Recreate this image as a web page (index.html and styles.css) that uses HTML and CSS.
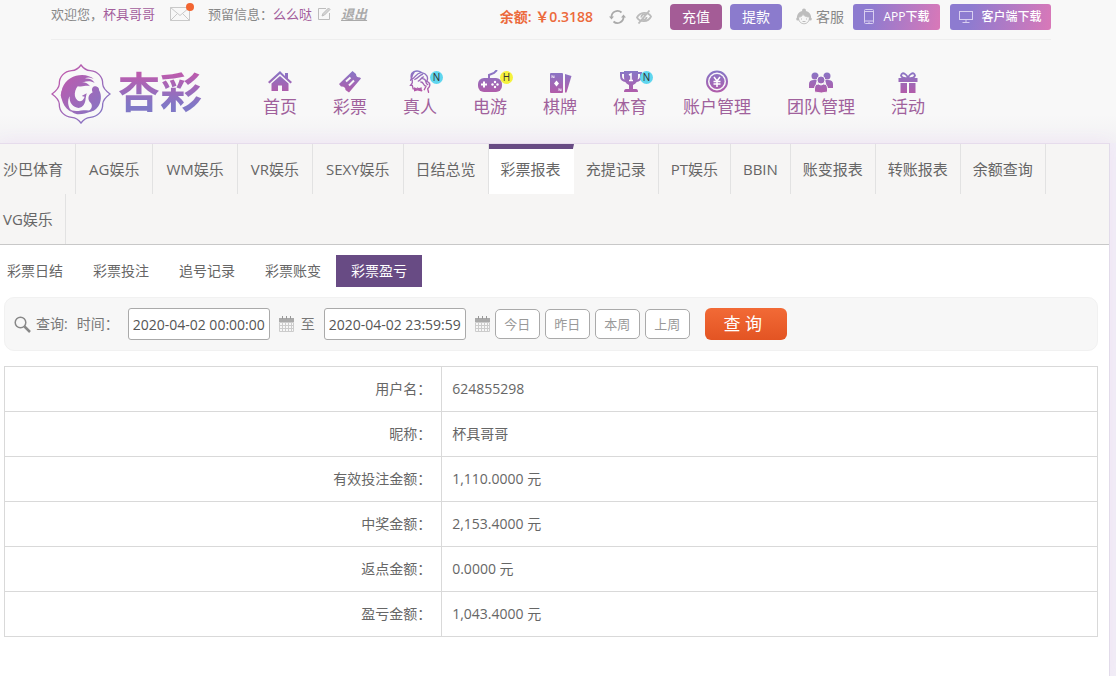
FILE: index.html
```html
<!DOCTYPE html>
<html lang="zh-CN">
<head>
  <meta charset="UTF-8">
  <meta name="viewport" content="width=device-width, initial-scale=1.0">
  <title>杏彩 - 彩票盈亏</title>
  <link rel="stylesheet" href="styles.css">
</head>
<body>
  <!-- shared gradients for the icons -->
  <svg class="defs" width="0" height="0" aria-hidden="true">
    <defs>
      <linearGradient id="grad" x1="0" y1="0" x2="0" y2="24" gradientUnits="userSpaceOnUse">
        <stop offset="0" stop-color="#8578c8"/>
        <stop offset="1" stop-color="#b45aa8"/>
      </linearGradient>
      <linearGradient id="grad-logo" x1="0" y1="0" x2="180" y2="180" gradientUnits="userSpaceOnUse">
        <stop offset="0.2" stop-color="#bb5cae"/>
        <stop offset="0.9" stop-color="#8078c6"/>
      </linearGradient>
    </defs>
  </svg>

  <header class="header">
    <div class="topbar">
      <div class="user-info">
        <span>欢迎您，<a href="#" class="name">杯具哥哥</a></span>
        <a href="#" class="mail" aria-label="站内信">
          <svg width="20" height="14" viewBox="0 0 20 14" fill="none" stroke="#c9c9c9"><path d="M.5.5h19v13H.5zM.5.5L10 8.500 19.500.5M.5 13.500L7.500 6.500M19.500 13.500L12.500 6.500"/></svg>
          <i class="mail-dot"></i>
        </a>
        <span>预留信息：<span class="name">么么哒</span></span>
        <a href="#" class="edit" aria-label="修改">
          <svg width="14" height="14" viewBox="0 0 14 14" fill="none" stroke="#bdbdbd"><path d="M9 1.500H1.500v11h11V6"/><path d="M5 9l1-2.500L11.500 1 13 2.500 7.500 8z" fill="#d5d5d5"/></svg>
        </a>
        <a href="#" class="logout">退出</a>
      </div>
      <div class="account">
        <span class="balance">余额: ￥0.3188</span>
        <button type="button" class="icon-btn" aria-label="刷新">
          <svg width="17" height="16" viewBox="0 0 17 16" fill="none" stroke="#aaa" stroke-width="1.800"><path d="M2.500 8A6 6 0 0 1 12.500 3.500M14.500 8A6 6 0 0 1 4.500 12.500"/><path d="M0 7.500h5L2.500 10.500zM12 8.500h5L14.500 5.500z" fill="#aaa" stroke="none"/></svg>
        </button>
        <button type="button" class="icon-btn" aria-label="隐藏余额">
          <svg width="16" height="14" viewBox="0 0 16 14" fill="none" stroke="#bbb" stroke-width="1.800"><path d="M1 7.500C4 1.500 12 1.500 15 6.500 12 12.500 4 12.500 1 7.500z"/><path d="M5.500 7.500a2.500 2.500 0 0 1 4-2.500M7 9.500a2.500 2.500 0 0 0 3.500-2.500M13.500.5L2.500 13.500"/></svg>
        </button>
        <button type="button" class="btn btn-recharge">充值</button>
        <button type="button" class="btn btn-withdraw">提款</button>
        <a href="#" class="service">
          <svg width="16" height="18" viewBox="0 0 16 18"><circle cx="8" cy="2.500" r="2" fill="#bdbdbd"/><path d="M1 11C-.5 0 16.500 0 15 11z" fill="#bdbdbd"/><path d="M2.500 9c2 .5 3.500-1 4.500-2.500C9 8.500 11 9 13.500 9 14 18 2 18 2.500 9z" fill="#f6f6f6" stroke="#c4c4c4"/><circle cx="1.700" cy="11" r="1.500" fill="#bdbdbd"/><circle cx="14.300" cy="11" r="1.500" fill="#bdbdbd"/><path d="M5.500 10.500v1M10.500 10.500v1M6.500 13.500h3" stroke="#bdbdbd"/></svg>
          客服
        </a>
        <a href="#" class="btn btn-download">
          <svg width="12" height="16" viewBox="0 0 12 16" fill="none" stroke="#d9cff0"><rect x="1.500" y=".5" width="9" height="14" rx="1"/><path d="M1.500 12h9M1.500 2.500h9M5.500 13.500h1"/></svg>
          <span>APP下载</span>
        </a>
        <a href="#" class="btn btn-download btn-client">
          <svg width="14" height="12" viewBox="0 0 14 12" fill="none" stroke="#d9cff0"><rect x=".5" y=".5" width="13" height="8"/><path d="M7 8.500v2.500M3.500 11.500h7"/></svg>
          <span>客户端下载</span>
        </a>
      </div>
    </div>

    <div class="brand-row">
      <a href="#" class="logo">
        <svg width="60" height="60" viewBox="0 0 180 180" aria-hidden="true">
          <path d="M90 3C82 14 74 19 62 20 40 22 24 38 25 60 24 72 14 82 3 90 14 98 24 108 25 120 24 142 40 158 62 160 74 161 82 166 90 177 98 166 106 161 118 160 140 158 156 142 155 120 156 108 166 98 177 90 166 82 156 72 155 60 156 38 140 22 118 20 106 19 98 14 90 3z" fill="none" stroke="url(#grad-logo)" stroke-width="4"/>
          <g fill="url(#grad-logo)">
            <path d="M131 47C104 22 50 31 34 72 24 101 38 133 63 145 49 127 49 109 56 97 54 116 66 131 83 132 96 131 103 119 104 103L107 88 92 96 101 98C96 110 88 116 79 109 64 96 72 64 97 55 109 50 121 51 131 57 125 45 112 42 101 44 111 37 123 41 131 47z"/>
            <path d="M77 65C86 50 107 52 117 67 104 62 93 72 77 65z"/>
            <path d="M131 67C139 67 145 72 144 78 153 92 151 115 141 128 133 140 121 144 110 143 121 137 126 128 120 118 107 106 112 91 125 85 121 77 123 69 131 67z"/>
            <path d="M53 133C71 151 99 132 122 142 106 148 97 151 83 151 70 151 59 143 53 133z"/>
            <path d="M29 94C31 80 36 70 44 63 37 79 37 101 43 116 35 110 31 104 29 94z"/>
          </g>
        </svg>
        <span class="logo-text">杏彩</span>
      </a>
      <nav class="nav">
        <a href="#">
          <svg width="26" height="24" viewBox="0 0 26 24" fill="url(#grad)"><path d="M13 1L1 12l1.500 1.500L13 4l10.500 9.500L25 12l-4-3.500V3h-3v3z"/><path d="M4.500 13.500L13 6l8.500 7.500V21H15v-5.500h-4V21H4.500z"/></svg>
          首页
        </a>
        <a href="#">
          <svg width="26" height="24" viewBox="0 0 26 24"><path d="M15.500 1L19 4q0 3.500 4 3.500l1 1L12 22.500 8.500 20q0-4-4.500-3.500L2 14z" fill="url(#grad)"/><path d="M9 11.500l4.500-4M12 15.500l5-5" stroke="#f7f7f7" stroke-width="2"/></svg>
          彩票
        </a>
        <a href="#">
          <svg width="26" height="28" viewBox="0 0 26 28" fill="none" stroke="url(#grad)" stroke-width="1.600" stroke-linecap="round"><path d="M3 10C1 2 9-1 15 3c6 1 8 6 6 10 5 3 4 6 1 9l1 4M6 3C3 6 4 9 2 12M14 3C8 4 8 9 3 11M16 5c-4 1-5 5-9 6M17 8c-3 1-3 4-6 5M4 12v3l-2 3h2l1 4h3M16 10c6 0 2 6 6 7M14 14c4 0 2 4 6 5l-2 4M10 21l5 3"/><path d="M6 20l4 1.500 5-1.500v5l-5-1-4 1z" fill="url(#grad)" stroke="none"/></svg>
          <i class="tag tag-new">N</i>
          真人
        </a>
        <a href="#">
          <svg width="26" height="24" viewBox="0 0 26 24"><path d="M12 8.500V5l5-2 3-3" fill="none" stroke="url(#grad)" stroke-width="2"/><rect x="1" y="8" width="24" height="14" rx="6" fill="url(#grad)"/><path d="M7 11.500v6M4 14.500h6" stroke="#fff" stroke-width="2"/><g fill="#fff"><circle cx="18" cy="12" r="1.200"/><circle cx="18" cy="17" r="1.200"/><circle cx="15.500" cy="14.500" r="1.200"/><circle cx="20.500" cy="14.500" r="1.200"/></g></svg>
          <i class="tag tag-hot">H</i>
          电游
        </a>
        <a href="#">
          <svg width="26" height="24" viewBox="0 0 26 24"><rect x="3" y="3" width="13" height="20" rx="1" fill="url(#grad)"/><path d="M18 4l6.500 2-5 16.500H18z" fill="url(#grad)"/><path d="M9.500 10.500l2.500 3-2.500 3-2.500-3z" fill="#fff"/><path d="M5 8V5.500L7 8V5.500M12 21v-2.500l2 2.500v-2.500" stroke="#e8dff0" fill="none"/></svg>
          棋牌
        </a>
        <a href="#">
          <svg width="26" height="24" viewBox="0 0 26 24"><path d="M8 3H4v3q0 5 6 5M20 3h4v3q0 5-6 5" fill="none" stroke="url(#grad)" stroke-width="2"/><path d="M7 1h14v6q0 6-5 8v4h3q2 0 2 3H7q0-3 2-3h3v-4Q7 13 7 7z" fill="url(#grad)"/><path d="M12 5l2-1v6.500M12 10.500h4" fill="none" stroke="#fff" stroke-width="1.500"/></svg>
          <i class="tag tag-new">N</i>
          体育
        </a>
        <a href="#">
          <svg width="26" height="24" viewBox="0 0 26 24"><circle cx="13" cy="11.500" r="10" fill="none" stroke="url(#grad)" stroke-width="2"/><circle cx="13" cy="11.500" r="7.500" fill="url(#grad)"/><path d="M10 7l3 4 3-4M9.500 11.500h7M9.500 14h7M13 11v6" fill="none" stroke="#fff" stroke-width="1.500"/></svg>
          账户管理
        </a>
        <a href="#">
          <svg width="26" height="24" viewBox="0 0 26 24" fill="url(#grad)"><circle cx="7" cy="6" r="3.500"/><circle cx="19" cy="6" r="3.500"/><path d="M1 18v-4q0-4 5-4h3q-2 5-1 7l-1 1zM25 18v-4q0-4-5-4h-3q2 5 1 7l1 1z"/><circle cx="13" cy="10" r="4" stroke="#f7f7f7"/><path d="M6.500 22v-3q0-5 4-5 2.500 2 5 0 4 0 4 5v3q-6 2-13 0z" stroke="#f7f7f7"/></svg>
          团队管理
        </a>
        <a href="#">
          <svg width="26" height="24" viewBox="0 0 26 24" fill="url(#grad)"><path d="M13 8Q7 9 6 5.500 7 2 10 4q2 1 3 4 1-3 3-4 3-2 4 1.500Q19 9 13 8z" fill="none" stroke="url(#grad)" stroke-width="1.800"/><path d="M3.500 8h19v4h-19zM5.500 13H12v10H5.500zM14 13h6.500v10H14z"/></svg>
          活动
        </a>
      </nav>
    </div>
  </header>

  <main class="panel">
    <nav class="tabs">
      <a href="#">沙巴体育</a>
      <a href="#" class="wide">AG娱乐</a>
      <a href="#" class="wide">WM娱乐</a>
      <a href="#" class="wide">VR娱乐</a>
      <a href="#" class="wide">SEXY娱乐</a>
      <a href="#">日结总览</a>
      <a href="#" class="active">彩票报表</a>
      <a href="#">充提记录</a>
      <a href="#">PT娱乐</a>
      <a href="#">BBIN</a>
      <a href="#">账变报表</a>
      <a href="#">转账报表</a>
      <a href="#">余额查询</a>
      <a href="#">VG娱乐</a>
    </nav>

    <div class="content">
      <nav class="subtabs">
        <a href="#">彩票日结</a>
        <a href="#">彩票投注</a>
        <a href="#">追号记录</a>
        <a href="#">彩票账变</a>
        <a href="#" class="active">彩票盈亏</a>
      </nav>

      <form class="filter">
        <svg class="search-icon" width="17" height="17" viewBox="0 0 17 17" fill="none" stroke="#888"><circle cx="6.500" cy="6.500" r="5.300" stroke-width="1.500"/><path d="M10.500 10.500l5.500 5.500" stroke-width="2.500"/></svg>
        <span class="filter-title">查询:</span>
        <label class="filter-label" for="start-time">时间：</label>
        <input type="text" id="start-time" value="2020-04-02 00:00:00">
        <button type="button" class="icon-btn calendar" aria-label="选择开始时间">
          <svg width="15" height="16" viewBox="0 0 15 16"><path d="M0 2h15v4H0z" fill="#aaa"/><path d="M3.500 0v3M7.500 0v3M11.500 0v3" stroke="#999"/><path d="M.5 6.500h14v9H.5zM3.500 6v10M6.500 6v10M9.500 6v10M12.500 6v10M0 9.500h15M0 12.500h15" fill="none" stroke="#ccc"/></svg>
        </button>
        <label class="filter-to" for="end-time">至</label>
        <input type="text" id="end-time" value="2020-04-02 23:59:59">
        <button type="button" class="icon-btn calendar" aria-label="选择结束时间">
          <svg width="15" height="16" viewBox="0 0 15 16"><path d="M0 2h15v4H0z" fill="#aaa"/><path d="M3.500 0v3M7.500 0v3M11.500 0v3" stroke="#999"/><path d="M.5 6.500h14v9H.5zM3.500 6v10M6.500 6v10M9.500 6v10M12.500 6v10M0 9.500h15M0 12.500h15" fill="none" stroke="#ccc"/></svg>
        </button>
        <div class="quick">
          <button type="button">今日</button>
          <button type="button">昨日</button>
          <button type="button">本周</button>
          <button type="button">上周</button>
        </div>
        <button type="submit" class="btn-search">查 询</button>
      </form>

      <table class="report">
        <tbody>
          <tr><th scope="row">用户名：</th><td>624855298</td></tr>
          <tr><th scope="row">昵称：</th><td>杯具哥哥</td></tr>
          <tr><th scope="row">有效投注金额：</th><td>1,110.0000 元</td></tr>
          <tr><th scope="row">中奖金额：</th><td>2,153.4000 元</td></tr>
          <tr><th scope="row">返点金额：</th><td>0.0000 元</td></tr>
          <tr><th scope="row">盈亏金额：</th><td>1,043.4000 元</td></tr>
        </tbody>
      </table>
    </div>
  </main>
</body>
</html>
```
FILE: styles.css
```css
* {
  box-sizing: border-box;
}

body {
  display: flex;
  flex-direction: column;
  min-height: 100vh;
  margin: 0;
  background: #f1eef7;
  color: #666;
  font: 14px/20px "Open Sans", "Noto Sans CJK SC", sans-serif;
}

a {
  color: inherit;
  text-decoration: none;
}

button,
input {
  font: inherit;
}

button {
  cursor: pointer;
}

svg {
  display: block;
  flex: none;
}

.defs {
  position: absolute;
}

/* header */
.header {
  padding: 0 65px 0 51px;
  background: linear-gradient(#f8f8f8 80%, #f2f1f4);
}

.topbar {
  display: flex;
  justify-content: space-between;
  height: 40px;
  padding-top: 4px;
  border-bottom: 1px solid #eee;
}

.user-info,
.account {
  display: flex;
  align-items: center;
  height: 26px;
  white-space: nowrap;
}

.user-info {
  height: 20px;
  font-size: 13px;
  color: #888;
}

.name {
  color: #a35d9c;
}

.mail {
  position: relative;
  margin: 0 18px 0 15px;
}

.mail-dot {
  position: absolute;
  top: -4px;
  right: -4px;
  width: 8px;
  height: 8px;
  border-radius: 50%;
  background: #f26531;
}

.edit {
  margin: 0 10px 0 5px;
}

.logout {
  font-style: italic;
  font-weight: bold;
  color: #aaa;
  text-decoration: underline;
}

.balance {
  margin-right: 16px;
  font-weight: 600;
  color: #ec6a3c;
}

.icon-btn {
  padding: 0;
  border: 0;
  background: none;
}

.account .icon-btn {
  margin-right: 10px;
}

.btn {
  display: flex;
  align-items: center;
  justify-content: center;
  width: 52px;
  height: 26px;
  padding: 0;
  border: 0;
  border-radius: 4px;
  color: #fff;
}

.btn-recharge {
  margin: 0 8px;
  background: #a45c96;
}

.btn-withdraw {
  background: #8b7bcd;
}

.service {
  display: flex;
  align-items: center;
  gap: 4px;
  margin: 0 9px 0 14px;
  color: #888;
}

.btn-download {
  gap: 8px;
  width: 87px;
  border-radius: 3px;
  background: linear-gradient(100deg, #8d7bd0 20%, #d978b8);
  font-size: 12px;
  font-weight: 500;
}

.btn-client {
  width: 101px;
  margin-left: 10px;
}

.brand-row {
  display: flex;
  align-items: flex-start;
  gap: 43px;
  height: 103px;
  padding-top: 24px;
}

.logo {
  display: flex;
  align-items: flex-start;
  gap: 7px;
}

.logo-text {
  font: bold 42px/52px "Noto Sans CJK SC", sans-serif;
  background: linear-gradient(#bb5cae 20%, #8078c6 80%);
  -webkit-background-clip: text;
  background-clip: text;
  color: transparent;
}

.nav {
  display: flex;
  padding-top: 6px;
}

.nav a {
  position: relative;
  display: flex;
  flex-direction: column;
  align-items: center;
  padding: 0 18px;
  font-size: 17px;
  line-height: 26px;
  color: #a0619c;
  white-space: nowrap;
}

.nav svg {
  height: 24px;
}

.tag {
  position: absolute;
  top: 1px;
  right: 12px;
  width: 13px;
  height: 13px;
  border-radius: 50%;
  font: 10px/13px "Open Sans", sans-serif;
  color: #333;
  text-align: center;
}

.tag-new {
  background: #5fd6ef;
}

.tag-hot {
  background: #f5f23c;
}

/* main panel */
.panel {
  flex: 1;
  margin-right: 6px;
  border-top: 1px solid #e6dcec;
  border-right: 1px solid #e2dbea;
  background: #fff;
  box-shadow: 0 0 16px #f0e4f4;
}

.tabs {
  display: flex;
  flex-wrap: wrap;
  margin-left: -9px;
  border-bottom: 1px solid #c8c8c8;
  background: #f6f5f4;
  font-size: 15px;
}

.tabs a {
  height: 50px;
  padding: 0 12px;
  border-right: 1px solid #e2e2e2;
  line-height: 50px;
}

.tabs .wide {
  padding: 0 13px;
}

.tabs .active {
  border-top: 5px solid #684b84;
  border-right-color: #fff;
  background: #fff;
  line-height: 40px;
}

.content {
  padding: 10px 11px 40px 4px;
}

.subtabs {
  display: flex;
  margin-left: -12px;
}

.subtabs a {
  padding: 0 15px;
  line-height: 32px;
}

.subtabs .active {
  background: #684b84;
  color: #fff;
}

/* query form */
.filter {
  display: flex;
  align-items: center;
  height: 54px;
  margin: 10px 0 15px;
  padding: 0 9px;
  border: 1px solid #f1f1f1;
  border-radius: 10px;
  background: #f7f7f7;
  color: #777;
  white-space: nowrap;
}

.filter-title {
  margin: 0 9px 0 5px;
}

.filter-label {
  margin-right: 9px;
}

.filter input {
  width: 142px;
  height: 32px;
  padding: 0 4px;
  border: 1px solid #aaa;
  border-radius: 3px;
  background: #fff;
  color: #555;
}

.calendar {
  margin-left: 9px;
}

.filter-to {
  margin: 0 9px 0 7px;
}

.quick {
  display: flex;
  gap: 5px;
  margin: 0 15px 0 5px;
}

.quick button {
  width: 45px;
  height: 30px;
  padding: 0;
  border: 1px solid #aaa;
  border-radius: 5px;
  background: #fff;
  font-size: 13px;
  color: #999;
}

.btn-search {
  width: 82px;
  height: 32px;
  padding: 0 6px 0 0;
  border: 0;
  border-radius: 6px;
  background: linear-gradient(#f26a36, #e35423);
  font-size: 17px;
  color: #fff;
}

/* report table */
.report {
  width: 100%;
  border-collapse: collapse;
  table-layout: fixed;
}

.report th,
.report td {
  height: 45px;
  padding: 0 10px;
  border: 1px solid #d9d9d9;
}

.report th {
  width: 40%;
  font-weight: normal;
  text-align: right;
}
```
